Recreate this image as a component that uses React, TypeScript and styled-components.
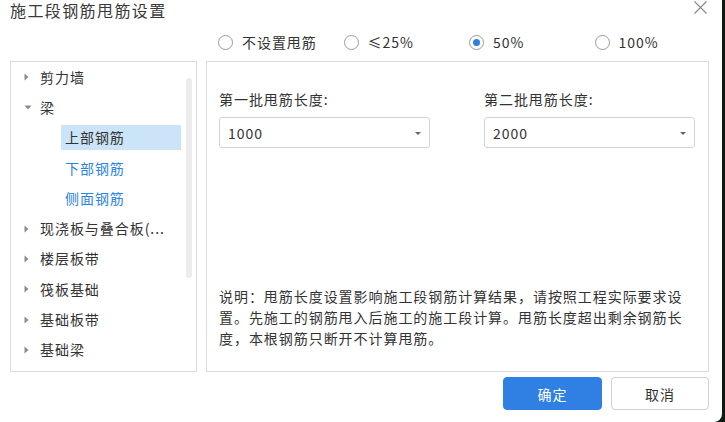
import React from "react";
import styled, { createGlobalStyle } from "styled-components";

const Global = createGlobalStyle`
  html, body { margin: 0; padding: 0; overflow: hidden; background: #0e1a12; }
  body { font-family: "Noto Sans CJK SC", "Noto Sans", sans-serif; }
  * { box-sizing: border-box; }
`;

const Dialog = styled.div`
  width: 722px;
  height: 422px;
  background: #fff;
  border-bottom-right-radius: 8px;
  display: flex;
  flex-direction: column;
  color: #333;
  font-size: 14px;
  letter-spacing: 0.95px;
`;

const Header = styled.div`
  height: 20px;
  display: flex;
  align-items: flex-start;
  justify-content: space-between;
  padding: 0 15px 0 10px;
`;

const Title = styled.div`
  font-size: 16px;
  letter-spacing: 1.4px;
  color: #3a3a3a;
  line-height: 20px;
  padding-top: 0;
`;

const Close = styled.div`
  width: 13px;
  height: 13px;
  margin-top: 1px;
  display: flex;
`;

const RadioRow = styled.div`
  height: 41px;
  padding: 3px 0 0 218px;
  display: flex;
  align-items: center;
`;

const RadioItem = styled.label`
  width: 125.5px;
  display: flex;
  align-items: center;
  gap: 9px;
  line-height: 20px;
`;

const Circle = styled.span<{ $checked?: boolean }>`
  width: 15px;
  height: 15px;
  border-radius: 50%;
  border: 1px solid #9a9a9a;
  display: flex;
  align-items: center;
  justify-content: center;
  &::after {
    content: "";
    width: 7px;
    height: 7px;
    border-radius: 50%;
    background: ${(p) => (p.$checked ? "#2d7fe0" : "transparent")};
  }
`;

const Body = styled.div`
  display: flex;
  gap: 9px;
  padding-left: 10px;
  height: 311px;
`;

const TreePanel = styled.div`
  position: relative;
  width: 187px;
  border: 1px solid #dcdcdc;
  display: flex;
  flex-direction: column;
`;

const Scrollbar = styled.div`
  position: absolute;
  left: 175px;
  top: 16px;
  width: 6px;
  height: 200px;
  border-radius: 3px;
  background: #ececec;
`;

const TreeRow = styled.div<{ $level: number }>`
  height: 30.3px;
  display: flex;
  align-items: center;
  padding-left: ${(p) => (p.$level === 1 ? 13 : 50)}px;
`;

const Arrow = styled.span`
  width: 16px;
  display: flex;
  align-items: center;
  justify-content: flex-start;
`;

const ItemText = styled.span<{ $level: number; $selected?: boolean }>`
  line-height: 25px;
  height: 25px;
  color: ${(p) => (p.$level === 2 && !p.$selected ? "#2b85e4" : "#333")};
  background: ${(p) => (p.$selected ? "#cce4f7" : "transparent")};
  width: ${(p) => (p.$level === 2 ? "120px" : "auto")};
  padding-left: ${(p) => (p.$level === 2 ? 4 : 0)}px;
  white-space: nowrap;
`;

const FormPanel = styled.div`
  width: 503px;
  border: 1px solid #dcdcdc;
  display: flex;
  flex-direction: column;
  padding: 27px 0 22px 12px;
`;

const Fields = styled.div`
  display: grid;
  grid-template-columns: 211px 211px;
  column-gap: 54px;
`;

const Field = styled.div`
  display: flex;
  flex-direction: column;
  gap: 8px;
`;

const Label = styled.div`
  line-height: 20px;
`;

const Select = styled.div`
  height: 31px;
  border: 1px solid #d4d4d4;
  border-radius: 3px;
  display: flex;
  align-items: center;
  justify-content: space-between;
  padding: 0 8px 0 8px;
`;

const Caret = styled.span`
  width: 0;
  height: 0;
  border-left: 3px solid transparent;
  border-right: 3px solid transparent;
  border-top: 3.5px solid #666;
  margin-top: 1px;
`;

const Note = styled.div`
  margin-top: auto;
  line-height: 21px;
  white-space: nowrap;
`;

const Footer = styled.div`
  display: flex;
  justify-content: flex-end;
  gap: 9px;
  padding: 5px 13px 0 0;
`;

const Button = styled.button<{ $primary?: boolean }>`
  height: 33px;
  width: ${(p) => (p.$primary ? 99 : 98)}px;
  border-radius: 4px;
  font-family: inherit;
  font-size: 14px;
  letter-spacing: 0.95px;
  border: 1px solid ${(p) => (p.$primary ? "#2f80e2" : "#d0d0d0")};
  background: ${(p) => (p.$primary ? "#2f80e2" : "#fff")};
  color: ${(p) => (p.$primary ? "#fff" : "#333")};
  padding: 0;
`;

const RightTri = () => (
  <svg width="5" height="8" viewBox="0 0 5 8">
    <path d="M0.5 0.5 L4.5 4 L0.5 7.5 Z" fill="#8a8a8a" />
  </svg>
);
const DownTri = () => (
  <svg width="8" height="5" viewBox="0 0 8 5">
    <path d="M0.5 0.5 L7.5 0.5 L4 4.5 Z" fill="#8a8a8a" />
  </svg>
);

type Item = { text: string; level: number; open?: boolean; selected?: boolean };
const tree: Item[] = [
  { text: "剪力墙", level: 1 },
  { text: "梁", level: 1, open: true },
  { text: "上部钢筋", level: 2, selected: true },
  { text: "下部钢筋", level: 2 },
  { text: "侧面钢筋", level: 2 },
  { text: "现浇板与叠合板(...", level: 1 },
  { text: "楼层板带", level: 1 },
  { text: "筏板基础", level: 1 },
  { text: "基础板带", level: 1 },
  { text: "基础梁", level: 1 },
];

const radios = [
  { label: "不设置甩筋" },
  { label: "≤25%" },
  { label: "50%", checked: true },
  { label: "100%" },
];

export default function App() {
  return (
    <>
      <Global />
      <Dialog>
        <Header>
          <Title>施工段钢筋甩筋设置</Title>
          <Close>
            <svg width="13" height="13" viewBox="0 0 13 13">
              <path d="M0.5 0.5 L12.5 12.5 M12.5 0.5 L0.5 12.5" stroke="#8a8a8a" strokeWidth="1.2" />
            </svg>
          </Close>
        </Header>
        <RadioRow>
          {radios.map((r) => (
            <RadioItem key={r.label}>
              <Circle $checked={r.checked} />
              <span>{r.label}</span>
            </RadioItem>
          ))}
        </RadioRow>
        <Body>
          <TreePanel>
            {tree.map((t) => (
              <TreeRow key={t.text} $level={t.level}>
                {t.level === 1 && <Arrow>{t.open ? <DownTri /> : <RightTri />}</Arrow>}
                <ItemText $level={t.level} $selected={t.selected}>
                  {t.text}
                </ItemText>
              </TreeRow>
            ))}
            <Scrollbar />
          </TreePanel>
          <FormPanel>
            <Fields>
              <Field>
                <Label>第一批甩筋长度:</Label>
                <Select>
                  <span>1000</span>
                  <Caret />
                </Select>
              </Field>
              <Field>
                <Label>第二批甩筋长度:</Label>
                <Select>
                  <span>2000</span>
                  <Caret />
                </Select>
              </Field>
            </Fields>
            <Note>
              说明：甩筋长度设置影响施工段钢筋计算结果，请按照工程实际要求设
              <br />
              置。先施工的钢筋甩入后施工的施工段计算。甩筋长度超出剩余钢筋长
              <br />
              度，本根钢筋只断开不计算甩筋。
            </Note>
          </FormPanel>
        </Body>
        <Footer>
          <Button $primary>确定</Button>
          <Button>取消</Button>
        </Footer>
      </Dialog>
    </>
  );
}
